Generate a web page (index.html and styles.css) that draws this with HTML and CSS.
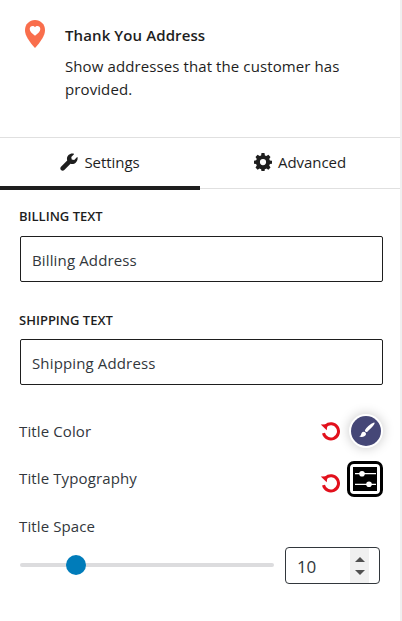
FILE: index.html
```html
<!DOCTYPE html>
<html lang="en">
<head>
<meta charset="utf-8">
<title>Thank You Address</title>
<link rel="stylesheet" href="styles.css">
</head>
<body>
<div class="panel">
  <header class="block-card">
    <svg class="pin" viewBox="0 0 20 28" aria-hidden="true">
      <path fill="#f96e4c" d="M10 0C4.400 0 0 4.400 0 10c0 3 1 5.500 2.700 8.500C4.800 22 7.700 25.500 10 28c2.300-2.500 5.200-6 7.300-9.500C19 15.500 20 13 20 10 20 4.400 15.600 0 10 0z"/>
      <path fill="#fff" d="M10 15.800C7 13.300 4.700 11.500 4.700 9c0-1.700 1.300-3 2.900-3 1 0 1.900.5 2.400 1.300C10.500 6.500 11.400 6 12.400 6c1.600 0 2.900 1.300 2.900 3 0 2.500-2.300 4.300-5.300 6.800z"/>
    </svg>
    <div class="block-info">
      <h1 class="block-title">Thank You Address</h1>
      <p class="block-desc">Show addresses that the customer has provided.</p>
    </div>
  </header>
  <nav class="tabs">
    <div class="tab tab-active">
      <svg class="tab-icon" viewBox="0 0 18 18" aria-hidden="true"><path fill="#1e1e1e" d="M17.500 4.300c-.1-.3-.4-.3-.6-.1l-2.700 2.700-2.500-.4-.4-2.500L14 1.300c.2-.2.100-.5-.2-.6C11.900.2 9.900.7 8.500 2.100 7 3.600 6.600 5.700 7.200 7.500L1 13.700c-.9.900-.9 2.400 0 3.300.9.900 2.400.9 3.300 0l6.200-6.200c1.800.6 3.900.2 5.400-1.300 1.400-1.400 2-3.400 1.600-5.200z"/></svg>
      <span>Settings</span>
    </div>
    <div class="tab">
      <svg class="tab-icon" viewBox="0 0 18 18" aria-hidden="true"><path fill="#1e1e1e" fill-rule="evenodd" d="M7.500 0h3l.4 2.400c.5.200 1 .4 1.400.7l2.100-1.300 2.100 2.100-1.300 2.100c.3.400.5.900.7 1.400L18 7.700v3l-2.100.4c-.2.500-.4 1-.7 1.400l1.300 2.100-2.100 2.100-2.100-1.300c-.4.300-.9.500-1.400.7l-.4 2.300h-3l-.4-2.300c-.5-.2-1-.4-1.400-.7l-2.100 1.300-2.100-2.100 1.300-2.100c-.3-.4-.5-.9-.7-1.400L0 10.700v-3l2.100-.4c.2-.5.400-1 .7-1.400L1.500 3.900l2.100-2.100 2.100 1.300c.4-.3.9-.5 1.400-.7L7.500 0zM9 6a3.100 3.100 0 1 0 0 6.200A3.100 3.100 0 0 0 9 6z"/></svg>
      <span>Advanced</span>
    </div>
  </nav>
  <section class="settings">
    <div class="field">
      <label class="caps-label">BILLING TEXT</label>
      <div class="text-box">Billing Address</div>
    </div>
    <div class="field field-second">
      <label class="caps-label">SHIPPING TEXT</label>
      <div class="text-box">Shipping Address</div>
    </div>
    <div class="control-row row-color">
      <span class="control-label">Title Color</span>
      <div class="control-actions actions-color">
        <svg class="reset" viewBox="0 0 20 20" aria-hidden="true"><path fill="none" stroke="#e2101c" stroke-width="3" d="M5.700 4.800A7.600 7.600 0 1 1 3.500 12.200"/><path fill="#e2101c" d="M.8 3.500l6.800-.3-.9 6.100z"/></svg>
        <span class="swatch">
          <svg viewBox="0 0 30 30" aria-hidden="true"><circle cx="15" cy="15" r="15" fill="#454777"/><path fill="#fff" d="M23.500 6.700c-1-.8-6.500 3.300-9.300 7-.6.800-.3 1.500.4 2 .7.500 1.400.5 2-.2 3.200-3 7.800-7.800 6.900-8.800z"/><path fill="#fff" d="M12.700 15.700c-1.800.2-2.300 1.600-2.700 3-.2.800-.8 1.400-2 1.800 2.500.9 6.200.6 7-2.200.3-1.400-1-2.700-2.300-2.600z"/></svg>
        </span>
      </div>
    </div>
    <div class="control-row row-typo">
      <span class="control-label">Title Typography</span>
      <div class="control-actions actions-typo">
        <svg class="reset reset-typo" viewBox="0 0 20 20" aria-hidden="true"><path fill="none" stroke="#e2101c" stroke-width="3" d="M5.700 4.800A7.600 7.600 0 1 1 3.500 12.200"/><path fill="#e2101c" d="M.8 3.500l6.800-.3-.9 6.100z"/></svg>
        <span class="typo-btn">
          <svg viewBox="0 0 24 24" aria-hidden="true"><path stroke="#fff" stroke-width="1.300" d="M2 6.700h21M2 17.300h21"/><circle cx="9" cy="6.700" r="2.800" fill="#fff"/><circle cx="16" cy="17.300" r="2.800" fill="#fff"/></svg>
        </span>
      </div>
    </div>
    <div class="range-field">
      <span class="control-label">Title Space</span>
      <div class="range-row">
        <div class="slider"><span class="thumb"></span></div>
        <div class="number-box">
          <span class="number-value">10</span>
          <span class="spin"><i class="arrow-up"></i><i class="arrow-down"></i></span>
        </div>
      </div>
    </div>
  </section>
</div>
</body>
</html>
```
FILE: styles.css
```css
* { box-sizing: border-box; }
html, body { margin: 0; padding: 0; height: 100%; background: #fff; overflow: hidden; }
body { width: 402px; height: 621px; border-right: 2px solid #f0f0f0; font-family: "Open Sans", "Noto Sans", sans-serif; color: #1e1e1e; }
.panel { width: 400px; }

.block-card { display: flex; height: 137px; padding: 20px 0 0 25px; }
.pin { width: 20px; height: 28px; flex: none; }
.block-info { margin-left: 20px; padding-top: 5px; width: 300px; }
.block-title { margin: 0; font-size: 15px; line-height: 20px; font-weight: 600; letter-spacing: .1px; }
.block-desc { margin: 10px 0 0; font-size: 15px; line-height: 23px; letter-spacing: .1px; }

.tabs { display: flex; height: 52px; border-top: 1px solid #e0e0e0; }
.tab { flex: 1; display: flex; align-items: center; justify-content: center; gap: 6px; height: 51px; border-bottom: 1px solid #e0e0e0; font-size: 15px; font-weight: 500; padding-bottom: 2px; letter-spacing: -.05px; }
.tab-active { border-bottom: 4px solid #1e1e1e; padding-bottom: 0; height: 52px; }
.tab-icon { width: 18px; height: 18px; flex: none; }

.settings { padding: 0 20px; }
.field { padding-top: 17px; }
.field-second { padding-top: 28px; }
.caps-label { display: block; font-size: 13px; line-height: 20px; font-weight: 600; margin-left: -1px; margin-bottom: 10px; letter-spacing: 0; }
.field-second .caps-label { margin-bottom: 9px; }
.text-box { width: 363px; height: 46px; border: 1px solid #1e1e1e; border-radius: 2px; padding: 0 11px; font-size: 15px; line-height: 47px; color: #32373c; letter-spacing: .14px; }

.control-row { display: flex; align-items: center; justify-content: space-between; width: 363px; }
.row-color { height: 34px; margin-top: 29px; }
.row-typo { height: 36px; margin-top: 13px; }
.control-label { font-size: 15px; line-height: 20px; margin-left: -1px; letter-spacing: .12px; color: #32373c; }
.row-typo .control-label { margin-top: -3px; }
.control-actions { display: flex; align-items: center; }
.actions-color { gap: 9px; }
.actions-typo { gap: 7px; }
.reset { width: 20px; height: 20px; flex: none; }
.reset-typo { margin-top: 8px; }
.swatch { display: block; width: 34px; height: 34px; padding: 2px; border-radius: 50%; background: #fff; box-shadow: 0 0 12px rgba(0,0,0,.22); }
.swatch svg { display: block; width: 30px; height: 30px; }
.typo-btn { display: block; width: 36px; height: 36px; background: #fff; border-radius: 7px; padding: 3px; border: 3px solid #000; }
.typo-btn svg { display: block; width: 24px; height: 24px; background: #000; }

.range-field { margin-top: 18px; }
.range-row { display: flex; align-items: center; justify-content: space-between; width: 360px; margin-top: 10px; }
.slider { position: relative; width: 254px; height: 4px; background: #dcdcde; border-radius: 2px; margin-top: -1px; }
.thumb { position: absolute; left: 46px; top: -8px; width: 20px; height: 20px; border-radius: 50%; background: #007cba; }
.number-box { display: flex; align-items: stretch; width: 95px; height: 37px; border: 1px solid #32373c; border-radius: 4px; padding-left: 11px; }
.number-value { flex: 1; font-size: 17px; line-height: 37px; color: #32373c; letter-spacing: -.3px; }
.spin { width: 19px; margin-right: 10px; background: #f0f0f0; display: flex; flex-direction: column; align-items: center; justify-content: center; gap: 8px; }
.arrow-up { width: 0; height: 0; border-left: 5px solid transparent; border-right: 5px solid transparent; border-bottom: 5px solid #505050; }
.arrow-down { width: 0; height: 0; border-left: 5px solid transparent; border-right: 5px solid transparent; border-top: 5px solid #505050; }
```
